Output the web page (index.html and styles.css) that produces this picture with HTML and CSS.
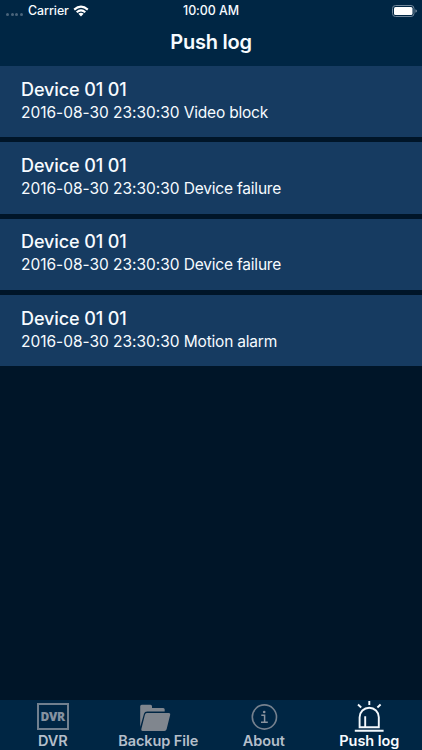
FILE: index.html
```html
<!DOCTYPE html>
<html lang="en">
<head>
<meta charset="utf-8">
<meta name="viewport" content="width=device-width, initial-scale=1">
<title>Push log</title>
<link rel="stylesheet" href="styles.css">
</head>
<body>
<div class="screen">
  <header class="header">
    <div class="status">
      <div class="carrier">
        <span class="signal"><i></i><i></i><i></i><i></i></span>
        <span class="carrier-name">Carrier</span>
        <svg class="wifi" viewBox="0 0 16 12" width="16" height="12"><g fill="none" stroke="#fff" stroke-width="2.1"><path d="M1.2 4.6Q8-1.5 14.8 4.6"/><path d="M3.7 7.3Q8 3.4 12.3 7.3"/></g><path d="M5.4 8.8Q8 6.7 10.6 8.8L8 11.4Z" fill="#fff"/></svg>
      </div>
      <span class="time">10:00 AM</span>
      <svg class="battery" viewBox="0 0 26 12" width="26" height="12"><rect x=".5" y=".5" width="21.5" height="11" rx="3" fill="none" stroke="#71879b"/><rect x="2" y="2" width="18.5" height="8" rx="1.5" fill="#fff"/><path d="M23.4 4.2Q25 4.8 25 6T23.4 7.8Z" fill="#71879b"/></svg>
    </div>
    <h1 class="title">Push log</h1>
  </header>
  <main class="list">
    <article class="row"><h2>Device 01 01</h2><p><span class="stamp">2016-08-30 23:30:30</span> Video block</p></article>
    <article class="row"><h2>Device 01 01</h2><p><span class="stamp">2016-08-30 23:30:30</span> Device failure</p></article>
    <article class="row"><h2>Device 01 01</h2><p><span class="stamp">2016-08-30 23:30:30</span> Device failure</p></article>
    <article class="row"><h2>Device 01 01</h2><p><span class="stamp">2016-08-30 23:30:30</span> Motion alarm</p></article>
  </main>
  <nav class="tabs">
    <a class="tab">
      <span class="dvr-icon">DVR</span>
      <span class="label">DVR</span>
    </a>
    <a class="tab">
      <svg class="folder" viewBox="0 0 32 32" width="32" height="32"><path d="M1.2 27V6.3Q1.2 4.8 2.7 4.8H11.5Q13 4.8 13 6.3V8H24.2Q25.7 8 25.7 9.5V11.6H8.2Q5.6 11.6 5 13.8Z" fill="#80868e"/><path d="M7.8 13H29.8Q31.6 13 31.2 14.7L27.6 29.2Q27.1 31 25.4 31H3.6Q1.9 31 2.3 29.3L5.9 14.8Q6.3 13 7.8 13Z" fill="#80868e"/></svg>
      <span class="label">Backup File</span>
    </a>
    <a class="tab">
      <svg viewBox="0 0 32 32" width="32" height="32"><circle cx="16.4" cy="17" r="12.1" fill="none" stroke="#75818e" stroke-width="1.6"/><circle cx="16.2" cy="12" r="1.3" fill="#8a939e"/><path d="M13.3 15.3H16.6V21.9M13 22.2H19.8" fill="none" stroke="#8a939e" stroke-width="1.5"/></svg>
      <span class="label">About</span>
    </a>
    <a class="tab active">
      <svg viewBox="0 0 32 32" width="32" height="32"><path d="M6.6 27.3V17.3A9.6 9.6 0 0 1 25.8 17.3V27.3ZM12.2 27V16.3M1.8 30.8H30.6M16.3 1.1V5M5 4.5L8.2 7.5M27.6 4.5L24.4 7.5" fill="none" stroke="#f4f9fd" stroke-width="1.9"/></svg>
      <span class="label">Push log</span>
    </a>
  </nav>
</div>
</body>
</html>
```

FILE: styles.css
```css
* { box-sizing: border-box; }
body { margin: 0; font-family: Inter, "Liberation Sans", sans-serif; color: #f7fbff; background: #001528; }
h1, h2, p { margin: 0; }
svg { display: block; }
.screen { display: flex; flex-direction: column; height: 750px; width: 422px; overflow: hidden; }
.header { height: 66px; background: #002644; }
.status { display: grid; grid-template-columns: 1fr auto 1fr; align-items: center; height: 21px; padding: 0 4px; font-size: 12.4px; font-weight: 500; }
.carrier { display: flex; align-items: center; padding-left: 2px; }
.signal { display: flex; gap: 1.6px; width: 22px; padding-top: 7px; }
.signal i { width: 3px; height: 3px; border-radius: 50%; background: #4a647b; }
.carrier-name { width: 41px; white-space: nowrap; letter-spacing: -.05px; }
.wifi { margin-left: 4px; }
.time { letter-spacing: -.05px; }
.battery { justify-self: end; }
.title { text-align: center; font-size: 20px; line-height: 43px; font-weight: 600; letter-spacing: -.25px; }
.list { flex: 1; display: flex; flex-direction: column; gap: 5px; }
.row { height: 71.35px; padding: 11.6px 21px 0; background: #163b61; white-space: nowrap; }
.row h2 { font-size: 18px; line-height: 23px; font-weight: 500; letter-spacing: -.1px; }
.row p { margin-top: 1.2px; font-size: 15.5px; line-height: 21px; letter-spacing: -.2px; }
.stamp { letter-spacing: -.02px; }
.tabs { display: grid; grid-template-columns: repeat(4, 1fr); height: 50px; background: #002644; }
.tab { display: flex; flex-direction: column; align-items: center; color: #b5bfca; }
.label { font-size: 14.5px; line-height: 18px; font-weight: 600; letter-spacing: -.08px; white-space: nowrap; }
.active { color: #f7fbff; }
.folder { transform: translateX(-3px); }
.dvr-icon { width: 32px; height: 27px; margin: 3px 0 2px; border: 2px solid #71808f; font: 800 12px/23px "Open Sans", sans-serif; text-align: center; color: #8592a0; letter-spacing: -.3px; }
```
